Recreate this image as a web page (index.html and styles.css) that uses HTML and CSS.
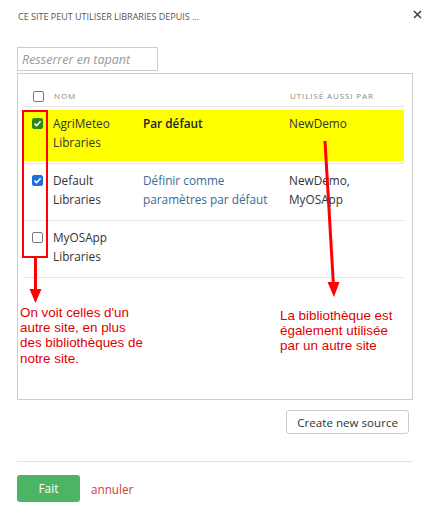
FILE: index.html
```html
<!DOCTYPE html>
<html lang="fr">
<head>
  <meta charset="UTF-8">
  <meta name="viewport" content="width=device-width, initial-scale=1.0">
  <title>Sources de librairies</title>
  <link rel="stylesheet" href="styles.css">
</head>
<body>

  <div class="dialog">
    <div class="dialog-head">
      <span class="dialog-title">Ce site peut utiliser Libraries depuis ...</span>
      <svg class="close" width="9" height="9" viewBox="0 0 9 9">
        <path d="M1 1 L8 8 M8 1 L1 8" stroke="#444" stroke-width="1.6" fill="none"/>
      </svg>
    </div>

    <input class="filter" type="text" placeholder="Resserrer en tapant">

    <div class="list-box">
      <div class="list-head">
        <span class="cell-check"><span class="box"></span></span>
        <span class="col-name">Nom</span>
        <span class="col-action"></span>
        <span class="col-used">Utilisé aussi par</span>
      </div>

      <div class="row">
        <div class="row-inner highlight">
          <span class="cell-check"><span class="box checked green"><svg width="9" height="9" viewBox="0 0 9 9"><path d="M1.5 4.6 L3.6 6.7 L7.6 2.2" stroke="#fff" stroke-width="1.6" fill="none"/></svg></span></span>
          <span class="col-name">AgriMeteo<br>Libraries</span>
          <span class="col-action default">Par défaut</span>
          <span class="col-used">NewDemo</span>
        </div>
      </div>

      <div class="row">
        <div class="row-inner">
          <span class="cell-check"><span class="box checked"><svg width="9" height="9" viewBox="0 0 9 9"><path d="M1.5 4.6 L3.6 6.7 L7.6 2.2" stroke="#fff" stroke-width="1.6" fill="none"/></svg></span></span>
          <span class="col-name">Default<br>Libraries</span>
          <span class="col-action"><a href="#">Définir comme paramètres par défaut</a></span>
          <span class="col-used">NewDemo,<br>MyOSApp</span>
        </div>
      </div>

      <div class="row">
        <div class="row-inner">
          <span class="cell-check"><span class="box"></span></span>
          <span class="col-name">MyOSApp<br>Libraries</span>
          <span class="col-action"></span>
          <span class="col-used"></span>
        </div>
      </div>
    </div>

    <div class="tools">
      <button class="btn-source">Create new source</button>
    </div>

    <div class="dialog-foot">
      <button class="btn-done">Fait</button>
      <a class="cancel" href="#">annuler</a>
    </div>
  </div>

  <!-- annotations par-dessus la capture -->
  <div class="mark-box"></div>
  <svg class="arrows" width="431" height="320" viewBox="0 0 431 320">
    <path d="M35.5 115 L35.5 150" stroke="#f00" stroke-width="3"/>
    <path d="M29.5 148 L41.5 148 L35.5 162 Z" fill="#f00"/>
    <path d="M325 0 L333.5 145" stroke="#f00" stroke-width="3"/>
    <path d="M327.5 141 L339.5 141 L334 156 Z" fill="#f00"/>
  </svg>
  <p class="note note-left">On voit celles d'un<br>autre site, en plus<br>des bibliothèques de<br>notre site.</p>
  <p class="note note-right">La bibliothèque est<br>également utilisée<br>par un autre site</p>

</body>
</html>
```

FILE: styles.css
```css
body {
  margin: 0;
  font-family: "Open Sans", "DejaVu Sans", sans-serif;
  color: #333;
  background: #fff;
  position: relative;
  width: 431px;
  height: 514px;
  overflow: hidden;
}
.dialog {
  padding: 0 18px 0 17px;
}
.dialog-head {
  display: flex;
  justify-content: space-between;
  align-items: center;
  height: 33px;
  padding-left: 1px;
}
.dialog-title {
  font-size: 9px;
  text-transform: uppercase;
  color: #555;
}
.close {
  margin-right: -9px;
  margin-top: -4px;
}
.filter {
  display: block;
  box-sizing: border-box;
  margin-top: 14px;
  width: 141px;
  height: 24px;
  border: 1px solid #ccc;
  padding: 0 4px;
  font-family: inherit;
  font-size: 12.5px;
}
.filter::placeholder {
  font-style: italic;
  color: #999;
}
.list-box {
  margin-top: 2px;
  border: 1px solid #ccc;
  height: 325px;
  padding: 0 8px 0 5px;
}
.list-head {
  display: grid;
  grid-template-columns: 30px 90px 146px 1fr;
  align-items: end;
  height: 32px;
  border-bottom: 1px solid #e6e6e6;
  font-size: 8px;
  letter-spacing: 0.9px;
  text-transform: uppercase;
  color: #888;
}
.list-head .cell-check {
  padding: 0 0 4px 10px;
}
.list-head .col-name,
.list-head .col-used {
  padding-bottom: 5px;
  padding-left: 1px;
}
.row {
  padding: 3px 0 2px;
  border-bottom: 1px solid #e6e6e6;
}
.row-inner {
  display: grid;
  grid-template-columns: 30px 90px 146px 1fr;
  padding: 4px 0 9px;
  font-size: 11.8px;
  line-height: 19px;
  height: 38px;
}
.highlight {
  background: #ffff00;
  margin-left: -1px;
  padding-left: 1px;
}
.cell-check {
  padding: 4px 0 0 9px;
}
.box {
  display: flex;
  align-items: center;
  justify-content: center;
  box-sizing: border-box;
  width: 11px;
  height: 11px;
  border: 1px solid #777;
  border-radius: 2px;
  background: #fff;
}
.box.checked {
  border-color: #1f6fd8;
  background: #1f6fd8;
}
.box.checked.green {
  border-color: #2b8a12;
  background: #2b8a12;
}
.default {
  font-weight: 600;
  color: #222;
}
.col-action a {
  color: #3b6a99;
  text-decoration: none;
}
.tools {
  display: flex;
  justify-content: flex-end;
  padding: 10px 4px 0 0;
}
.btn-source {
  height: 24px;
  padding: 0 10px;
  background: #fff;
  border: 1px solid #ccc;
  border-radius: 3px;
  font-family: inherit;
  font-size: 11.6px;
  color: #333;
}
.dialog-foot {
  display: flex;
  align-items: center;
  gap: 11px;
  margin-top: 27px;
  padding-top: 13px;
  border-top: 1px solid #e2e2e2;
}
.btn-done {
  width: 63px;
  height: 27px;
  border: none;
  border-radius: 3px;
  background: #4cb465;
  color: #fff;
  font-family: inherit;
  font-size: 12px;
}
.cancel {
  color: #d33a3a;
  font-size: 11.7px;
  text-decoration: none;
}
.mark-box {
  position: absolute;
  left: 22px;
  top: 110px;
  width: 22px;
  height: 144px;
  border: 2px solid #f00;
}
.arrows {
  position: absolute;
  left: 0;
  top: 141px;
}
.note {
  position: absolute;
  margin: 0;
  font-family: "Liberation Sans", Arial, sans-serif;
  font-size: 13.4px;
  line-height: 15.2px;
  color: #e00000;
}
.note-left {
  left: 20px;
  top: 305px;
}
.note-right {
  left: 280px;
  top: 308px;
}
```
